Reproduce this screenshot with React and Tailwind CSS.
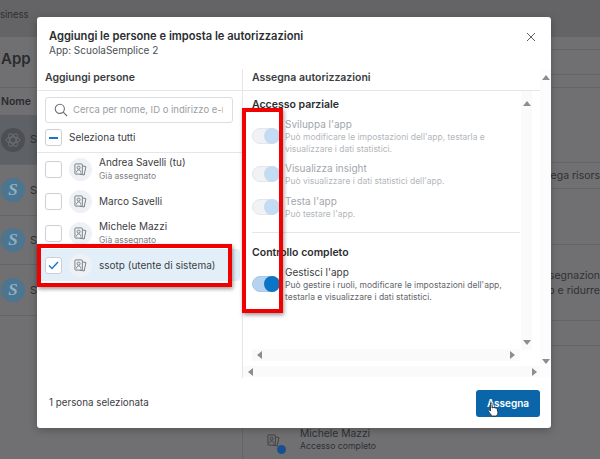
const Tri = ({ d, c = "#8a8d91" }) => {
  const pts = { u: "0,5 4,0 8,5", d: "0,0 8,0 4,5", l: "5,0 5,8 0,4", r: "0,0 0,8 5,4" }[d];
  const vert = d === "u" || d === "d";
  return (
    <svg width={vert ? 8 : 5} height={vert ? 5 : 8} viewBox={vert ? "0 0 8 5" : "0 0 5 8"} className="block shrink-0">
      <polygon points={pts} fill={c} />
    </svg>
  );
};

const PeopleIcon = ({ color = "#75797e" }) => (
  <svg width="13" height="13" viewBox="0 0 14 14" fill="none" stroke={color} strokeWidth="1">
    <rect x="1" y="1" width="8" height="11" rx="0.8" />
    <path d="M9.5 3.2l3.3 .7-1.8 9-4.4-.9" />
    <circle cx="5" cy="5" r="1.6" />
    <path d="M2.6 10.2c.3-2 1.2-2.8 2.4-2.8s2.1.8 2.4 2.8" />
  </svg>
);

const Avatar = () => (
  <div className="w-[23px] h-[23px] rounded-full bg-[#eef1f5] flex items-center justify-center shrink-0">
    <PeopleIcon />
  </div>
);

const Box = ({ children }) => (
  <div className="w-[17px] h-[17px] rounded-[3px] border border-[#ccd0d5] bg-white flex items-center justify-center shrink-0">
    {children}
  </div>
);

const Person = ({ name, sub, checked, h }) => (
  <div className={`flex items-center gap-[7px] pl-[5px] mr-[2px] rounded-r-[4px] ${h} ${checked ? "bg-[#e3eff8]" : ""}`}>
    <Box>
      {checked && (
        <svg width="11" height="9" viewBox="0 0 11 9" fill="none" stroke="#1877c9" strokeWidth="1.4">
          <path d="M1 4.5l3 3 6-6.5" />
        </svg>
      )}
    </Box>
    <Avatar />
    <div className="flex flex-col">
      <div className="text-[10px] leading-[13px] text-[#3c4043]">{name}</div>
      {sub && <div className="text-[8.5px] leading-[12px] mt-[1px] text-[#7d8287]">{sub}</div>}
    </div>
  </div>
);

const Toggle = ({ on }) => (
  <div className={`relative w-[28px] h-[16px] rounded-full shrink-0 border ${on ? "bg-[#b5d3f0] border-[#a6c8e8]" : "bg-[#f0f2f5] border-[#e4e6ea]"}`}>
    <div className={`absolute right-[-1px] top-[-1px] w-[16px] h-[16px] rounded-full ${on ? "bg-[#0b74c4]" : "bg-[#c4dcf3]"}`} />
  </div>
);

const Perm = ({ title, desc, on, h }) => (
  <div className={h}>
    <div className="flex items-center">
      <Toggle on={on} />
      <div className="ml-[5px]">
        <div className={`text-[10px] leading-[14px] ${on ? "text-[#3c4043]" : "text-[#a2a6ab]"}`}>{title}</div>
        <div className={`text-[8.5px] leading-[12px] ${on ? "text-[#63676c]" : "text-[#b3b7bc]"}`}>{desc}</div>
      </div>
    </div>
  </div>
);

const BgRow = ({ active, h, icon }) => (
  <div className={`flex items-center gap-[5px] pl-[1px] border-b border-[#656568] ${h} ${active ? "bg-[#5e6165]" : ""}`}>
    <div
      className={`w-[24px] h-[24px] rounded-full flex items-center justify-center text-[17px] italic font-bold text-[#8fb0c2] ${icon === "gear" ? "bg-[#4c4f53]" : "bg-[#4b7590]"}`}
      style={icon === "gear" ? undefined : { fontFamily: "'Liberation Serif', serif" }}
    >
      {icon === "gear" ? (
        <svg width="16" height="16" viewBox="0 0 16 16" fill="none" stroke="#6c7075" strokeWidth="1">
          <ellipse cx="8" cy="8" rx="7" ry="3" />
          <ellipse cx="8" cy="8" rx="7" ry="3" transform="rotate(60 8 8)" />
          <ellipse cx="8" cy="8" rx="7" ry="3" transform="rotate(120 8 8)" />
        </svg>
      ) : "S"}
    </div>
    <span className="text-[11px] text-[#2f3033]">S</span>
  </div>
);

export default function App() {
  return (
    <div
      className="relative w-[600px] h-[459px] overflow-hidden bg-[#707072] text-[#2f3033]"
      style={{ fontFamily: "Inter, 'Liberation Sans', sans-serif" }}
    >
      {/* page behind the dialog */}
      <div className="h-[37px] bg-[#646365] pt-[8px] text-[9.5px] leading-[14px] text-[#2f3033]">siness</div>
      <div className="flex h-[422px]">
        <div className="w-[243px] border-r border-[#656568] shrink-0">
          <div className="h-[51px] pt-[11px] pl-[1px] text-[15px] font-semibold text-[#2a2b2e] border-b border-[#656568]">App</div>
          <div className="h-[27px] pl-[1px] flex items-center text-[10.5px] font-semibold text-[#2a2b2e]">Nome</div>
          <BgRow active h="h-[50px]" icon="gear" />
          <BgRow h="h-[51px]" icon="s" />
          <BgRow h="h-[49px]" icon="s" />
          <BgRow h="h-[51px]" icon="s" />
        </div>
        <div className="flex-1 min-w-0">
          <div className="h-[13px] border-b border-[#656568]" />
          <div className="h-[25px] border-b border-[#656568]" />
          <div className="h-[13px] border-b border-[#656568]" />
          <div className="h-[75px] border-b border-[#656568]" />
          <div className="h-[26px] border-b border-[#656568] flex items-center justify-end text-[10.5px] whitespace-nowrap overflow-hidden">lega risors</div>
          <div className="h-[56px] border-b border-[#656568]" />
          <div className="h-[76px] border-b border-[#656568] flex flex-col justify-center items-end text-[10.5px] leading-[15px] whitespace-nowrap overflow-hidden">
            <div>ssegnazion</div>
            <div>p e ridurre</div>
          </div>
          <div className="h-[25px] border-b border-[#656568]" />
          <div className="flex items-center gap-[8px] pl-[24px] mt-[80px]">
            <div className="relative w-[16px] h-[16px] mt-[4px]">
              <PeopleIcon color="#3e4043" />
              <div className="absolute right-[-3px] bottom-[-4px] w-[9px] h-[9px] rounded-full bg-[#1a4f8f]" />
            </div>
            <div className="pl-[9px]">
              <div className="text-[10.3px] leading-[14px]">Michele Mazzi</div>
              <div className="text-[8.7px] leading-[13px]">Accesso completo</div>
            </div>
          </div>
        </div>
      </div>

      {/* dialog */}
      <div className="absolute left-[37px] top-[17px] w-[514px] h-[411px] bg-white rounded-[3px] flex flex-col shadow-[0_2px_8px_rgba(0,0,0,0.25)]">
        <div className="h-[52px] shrink-0 pl-[12px] pr-[15px] pt-[12px] flex justify-between">
          <div>
            <div className="text-[11.15px] leading-[15px] font-semibold text-[#2b2e31]">Aggiungi le persone e imposta le autorizzazioni</div>
            <div className="text-[10px] leading-[13px] text-[#4b4f54]">App: ScuolaSemplice 2</div>
          </div>
          <svg width="10" height="10" viewBox="0 0 10 10" stroke="#5d6166" strokeWidth="1" className="mt-[3px]">
            <path d="M1 1l8 8M9 1l-8 8" />
          </svg>
        </div>

        <div className="flex h-[309px] shrink-0">
          {/* left column */}
          <div className="w-[206px] shrink-0 border-r border-[#e4e6ea] flex flex-col">
            <div className="h-[22px] shrink-0 pl-[8px] pb-[4px] flex items-center text-[10.5px] font-semibold text-[#3a3d41] border-b border-[#e4e6ea]">Aggiungi persone</div>
            <div className="px-[8px] pt-[6px]">
              <div className="h-[26px] w-[188px] border border-[#dadde1] rounded-[3px] flex items-center pl-[8px] pr-[9px] gap-[5px]">
                <svg width="14" height="14" viewBox="0 0 14 14" fill="none" stroke="#6a6e73" strokeWidth="1.1" className="shrink-0">
                  <circle cx="5.8" cy="5.8" r="4.6" />
                  <path d="M9.2 9.2L13 13" />
                </svg>
                <span className="text-[9.5px] text-[#9a9ea3] whitespace-nowrap overflow-hidden">Cerca per nome, ID o indirizzo e-mail</span>
              </div>
              <div className="flex items-center gap-[7px] h-[17px] mt-[6px]">
                <Box><div className="w-[9px] h-[2px] bg-[#1877c9]" /></Box>
                <span className="text-[10px] text-[#3c4043]">Seleziona tutti</span>
              </div>
            </div>
            <div className="h-[7px] shrink-0 border-b border-[#e4e6ea]" />
            <div className="pl-[3px]">
              <Person name="Andrea Savelli (tu)" sub="Già assegnato" h="h-[32px]" />
              <Person name="Marco Savelli" h="h-[32px]" />
              <Person name="Michele Mazzi" sub="Già assegnato" h="h-[32px]" />
              <Person name="ssotp (utente di sistema)" checked h="h-[32px]" />
            </div>
          </div>

          {/* right column */}
          <div className="flex-1 flex min-w-0">
            <div className="flex-1 min-w-0 flex flex-col">
              <div className="h-[22px] shrink-0 pl-[9px] pb-[4px] flex items-center text-[10.5px] font-semibold text-[#3a3d41] border-b border-[#e4e6ea]">Assegna autorizzazioni</div>
              <div className="h-[259px] shrink-0 flex pl-[9px]">
                <div className="w-[268px] shrink-0 pt-[7px]">
                  <div className="text-[10.5px] leading-[14px] font-semibold text-[#2b2e31] mb-[5px]">Accesso parziale</div>
                  <Perm title="Sviluppa l'app" desc={<>Può modificare le impostazioni dell'app, testarla e<br />visualizzare i dati statistici.</>} h="h-[44px]" />
                  <Perm title="Visualizza insight" desc="Può visualizzare i dati statistici dell'app." h="h-[33px]" />
                  <Perm title="Testa l'app" desc="Può testare l'app." h="h-[33px]" />
                  <div className="border-t border-[#e4e6ea] mt-[5px] pt-[13px]">
                    <div className="text-[10.5px] leading-[14px] font-semibold text-[#2b2e31] mb-[5px]">Controllo completo</div>
                    <Perm title="Gestisci l'app" desc={<>Può gestire i ruoli, modificare le impostazioni dell'app,<br />testarla e visualizzare i dati statistici.</>} on h="h-[44px]" />
                  </div>
                </div>
                <div className="w-[11px] shrink-0 bg-[#fafafa] ml-[1px] flex flex-col items-center justify-between pt-[10px] pb-[5px]">
                  <Tri d="u" />
                  <Tri d="d" />
                </div>
              </div>
              <div className="h-[12px] shrink-0 ml-[9px] mr-[20px] bg-[#fafafa] flex items-center justify-between px-[5px] mt-[-1px]">
                <Tri d="l" />
                <Tri d="r" />
              </div>
              <div className="h-[11px] shrink-0 mt-[5px] bg-[#fafafa] flex items-center justify-between pl-[5px] pr-[3px]">
                <Tri d="l" />
                <Tri d="r" />
              </div>
            </div>
            <div className="w-[11px] shrink-0 bg-[#fcfcfc] flex flex-col items-center justify-between pt-[6px] pb-[14px]">
              <Tri d="u" />
              <Tri d="d" />
            </div>
          </div>
        </div>

        <div className="flex-1 flex items-center justify-between pl-[12px] pr-[11px]">
          <span className="text-[9.8px] text-[#3c4043] pt-[1px]">1 persona selezionata</span>
          <div className="w-[64px] h-[27px] rounded-[3px] bg-[#0a66a8] text-white text-[10px] font-semibold flex items-center justify-center">Assegna</div>
        </div>
      </div>

      {/* annotations */}
      <div className="absolute left-[37px] top-[244px] w-[195px] h-[43px] border-[4px] border-[#f00000] shadow-[1px_2px_4px_rgba(0,0,0,0.4)]" />
      <div className="absolute left-[242px] top-[108px] w-[41px] h-[205px] border-[4px] border-[#f00000] shadow-[1px_2px_4px_rgba(0,0,0,0.4)]" />
      <svg width="12" height="15" viewBox="0 0 12 15" className="absolute left-[487px] top-[402px]">
        <path d="M3.5 1.2c.8-.5 1.5 0 1.5 1V6l.4 0c.3-.6 1.3-.6 1.6 0 .4-.5 1.3-.4 1.6.2.5-.4 1.4-.1 1.5.7L10.9 10.500c0 1.500-.9 3.200-2 3.500H5.200C4.400 13.500 2.500 10.800 1.300 9c-.5-.9.4-1.700 1.200-1l1 1.100z" fill="#fff" stroke="#222" strokeWidth="0.8" />
      </svg>
    </div>
  );
}
